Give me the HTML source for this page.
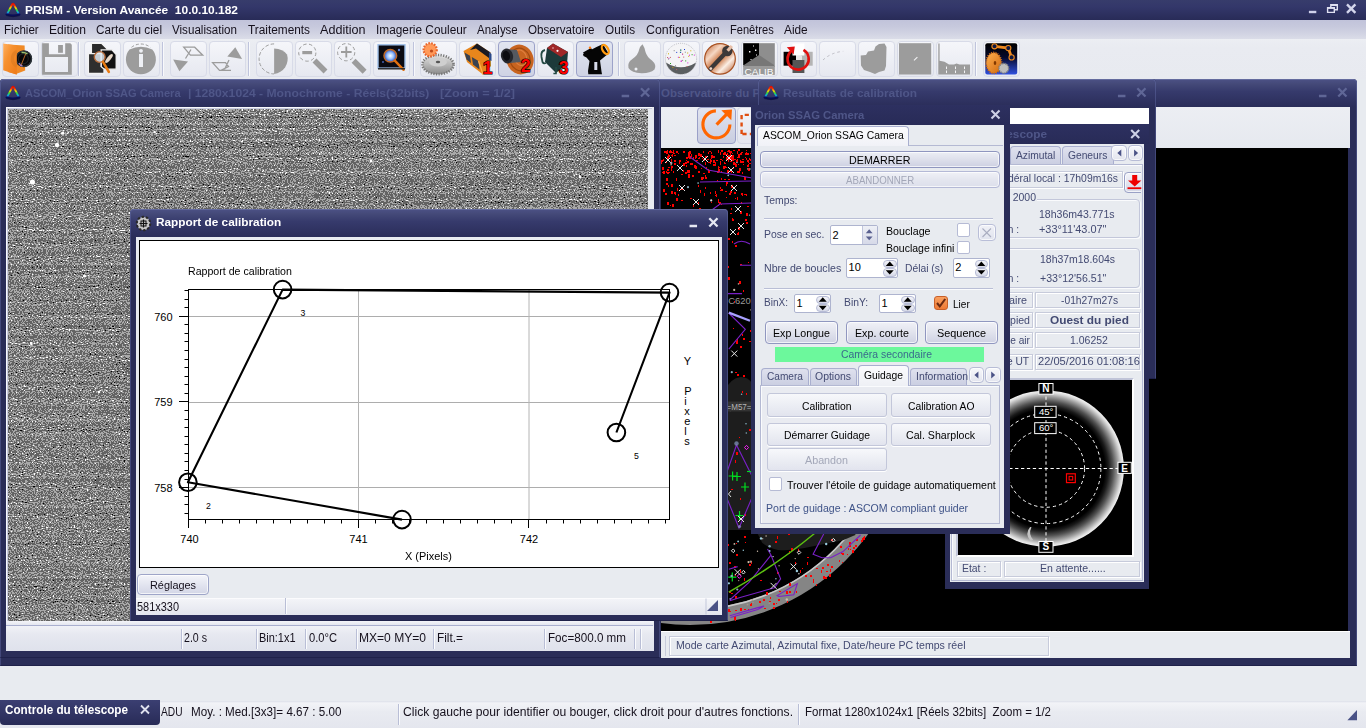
<!DOCTYPE html>
<html lang="fr"><head><meta charset="utf-8"><title>PRISM - Version Avancée 10.0.10.182</title>
<style>
html,body{margin:0;padding:0}
body{width:1366px;height:728px;overflow:hidden;background:#e8ebf0;position:relative;font-family:"Liberation Sans",sans-serif}
div{position:absolute;box-sizing:border-box}
svg{position:absolute;overflow:visible}
.t{position:absolute;white-space:pre;line-height:1;transform-origin:0 0}
.win{background:#2a2d58;border-radius:4px 4px 0 0;overflow:hidden}
.tb{left:0;top:0;right:0;background:linear-gradient(#6a7099 0,#4a4f82 1.5px,#444978 5px,#363a6c 45%,#2a2d59 100%)}
.btn{border:1px solid #9ea5c8;border-radius:4px;background:linear-gradient(#f4f5fa,#e3e5f0 50%,#d3d6e6);box-shadow:inset 0 0 0 1px rgba(255,255,255,.7)}
.btn2{border:1px solid #c3c7da;border-radius:3px;background:linear-gradient(#f7f8fb,#eceef4 50%,#e2e4ee);box-shadow:0 1px 0 #fff}
.ed{border:1px solid #aeb4cf;background:#fff;border-radius:2px}
.pn{border:1px solid #c7cbdb;box-shadow:inset 1px 1px 0 #fff, 1px 1px 0 #fff;}
</style></head><body>
<div style="left:0px;top:0px;width:1366px;height:19.5px;background:linear-gradient(#373c6b 0,#33376a 35%,#282b57 100%)"></div>
<svg style="left:4.6px;top:1.9px" width="16" height="16" viewBox="0 0 17 17"><defs><linearGradient id="rb4601" x1="0" y1="0" x2="0" y2="1"><stop offset="0" stop-color="#e01000"/><stop offset=".18" stop-color="#ff3000"/><stop offset=".4" stop-color="#ffd800"/><stop offset=".6" stop-color="#30d830"/><stop offset=".8" stop-color="#10b0e0"/><stop offset="1" stop-color="#1030b0"/></linearGradient></defs><path d="M2.2 13 L7.6 2.4 Q8.5 1.2 9.4 2.4 L14.8 13" fill="none" stroke="url(#rb4601)" stroke-width="1.9" stroke-linejoin="round" stroke-linecap="round"/><path d="M1.6 13.3 Q8.5 15.6 15.4 13.3" fill="none" stroke="#0a0e58" stroke-width="2.2" stroke-linecap="round"/><path d="M2 14.6 Q8.5 16.8 15 14.6" fill="none" stroke="#10123a" stroke-width="1" stroke-linecap="round" opacity=".8"/></svg>
<span class="t" style="left:25.20px;top:4.77px;font-size:11.5px;color:#fff;font-weight:bold;transform:scaleX(1.0391);">PRISM - Version Avancée  10.0.10.182</span>
<svg style="left:0;top:0" width="1" height="1"><path d="M1308.9 12 h7.4" stroke="#cfd1ea" stroke-width="2.4"/><path d="M1330.8 4.6 h6.5 v5.2 h-6.5 z M1330.8 5.2 h6.5" fill="none" stroke="#dfe0f0" stroke-width="1.4"/><path d="M1327.6 7.6 h6.7 v4.8 h-6.7 z" fill="#2c2f60" stroke="#dfe0f0" stroke-width="1.4"/><path d="M1327.6 8.1 h6.7" stroke="#dfe0f0" stroke-width="1.6"/><path d="M1347 4.4 l8.4 8.4 M1355.4 4.4 l-8.4 8.4" stroke="#d4d6ec" stroke-width="2.4"/></svg>
<div style="left:0px;top:19.5px;width:1366px;height:20px;background:linear-gradient(#c1c3da 0,#c7c9dd 35%,#d2d4e3 70%,#dcdee9 100%)"></div>
<span class="t" style="left:4.30px;top:24.24px;font-size:12px;color:#15101c;transform:scaleX(0.9637);">Fichier</span>
<span class="t" style="left:49.00px;top:24.24px;font-size:12px;color:#15101c;transform:scaleX(1.0084);">Edition</span>
<span class="t" style="left:96.00px;top:24.24px;font-size:12px;color:#15101c;transform:scaleX(0.9797);">Carte du ciel</span>
<span class="t" style="left:172.00px;top:24.24px;font-size:12px;color:#15101c;transform:scaleX(0.9679);">Visualisation</span>
<span class="t" style="left:248.00px;top:24.24px;font-size:12px;color:#15101c;transform:scaleX(0.9856);">Traitements</span>
<span class="t" style="left:320.00px;top:24.24px;font-size:12px;color:#15101c;transform:scaleX(1.0492);">Addition</span>
<span class="t" style="left:375.70px;top:24.24px;font-size:12px;color:#15101c;transform:scaleX(0.9865);">Imagerie Couleur</span>
<span class="t" style="left:477.00px;top:24.24px;font-size:12px;color:#15101c;transform:scaleX(0.9534);">Analyse</span>
<span class="t" style="left:528.00px;top:24.24px;font-size:12px;color:#15101c;transform:scaleX(0.9680);">Observatoire</span>
<span class="t" style="left:605.00px;top:24.24px;font-size:12px;color:#15101c;transform:scaleX(0.9780);">Outils</span>
<span class="t" style="left:646.00px;top:24.24px;font-size:12px;color:#15101c;transform:scaleX(1.0311);">Configuration</span>
<span class="t" style="left:730.00px;top:24.24px;font-size:12px;color:#15101c;transform:scaleX(0.9228);">Fenêtres</span>
<span class="t" style="left:784.00px;top:24.24px;font-size:12px;color:#15101c;transform:scaleX(0.9868);">Aide</span>
<div style="left:0px;top:39.3px;width:1366px;height:39.7px;background:linear-gradient(#eceef3 0,#e9ebf1 20%,#e8eaf0 100%)"></div>
<div style="left:1.5px;top:40.7px;width:37px;height:36.3px;background:linear-gradient(#f5f6fa,#e6e8f0);border:1px solid #d8dbe8;border-radius:4px"></div>
<div style="left:40.5px;top:40.7px;width:37px;height:36.3px;background:linear-gradient(#f5f6fa,#e6e8f0);border:1px solid #d8dbe8;border-radius:4px"></div>
<div style="left:84px;top:40.7px;width:37px;height:36.3px;background:linear-gradient(#f5f6fa,#e6e8f0);border:1px solid #d8dbe8;border-radius:4px"></div>
<div style="left:123px;top:40.7px;width:37px;height:36.3px;background:linear-gradient(#f5f6fa,#e6e8f0);border:1px solid #d8dbe8;border-radius:4px"></div>
<div style="left:169.5px;top:40.7px;width:37px;height:36.3px;background:linear-gradient(#f5f6fa,#e6e8f0);border:1px solid #d8dbe8;border-radius:4px"></div>
<div style="left:208.5px;top:40.7px;width:37px;height:36.3px;background:linear-gradient(#f5f6fa,#e6e8f0);border:1px solid #d8dbe8;border-radius:4px"></div>
<div style="left:255.5px;top:40.7px;width:37px;height:36.3px;background:linear-gradient(#f5f6fa,#e6e8f0);border:1px solid #d8dbe8;border-radius:4px"></div>
<div style="left:294.5px;top:40.7px;width:37px;height:36.3px;background:linear-gradient(#f5f6fa,#e6e8f0);border:1px solid #d8dbe8;border-radius:4px"></div>
<div style="left:333.5px;top:40.7px;width:37px;height:36.3px;background:linear-gradient(#f5f6fa,#e6e8f0);border:1px solid #d8dbe8;border-radius:4px"></div>
<div style="left:372.5px;top:40.7px;width:37px;height:36.3px;background:linear-gradient(#f5f6fa,#e6e8f0);border:1px solid #d8dbe8;border-radius:4px"></div>
<div style="left:419.5px;top:40.7px;width:37px;height:36.3px;background:linear-gradient(#f5f6fa,#e6e8f0);border:1px solid #d8dbe8;border-radius:4px"></div>
<div style="left:458.5px;top:40.7px;width:37px;height:36.3px;background:linear-gradient(#f5f6fa,#e6e8f0);border:1px solid #d8dbe8;border-radius:4px"></div>
<div style="left:497.5px;top:40.7px;width:37px;height:36.3px;background:linear-gradient(#e2e5f0,#cfd3e4);border:1px solid #9ca2c9;border-radius:4px"></div>
<div style="left:536.5px;top:40.7px;width:37px;height:36.3px;background:linear-gradient(#f5f6fa,#e6e8f0);border:1px solid #d8dbe8;border-radius:4px"></div>
<div style="left:575.5px;top:40.7px;width:37px;height:36.3px;background:linear-gradient(#e2e5f0,#cfd3e4);border:1px solid #9ca2c9;border-radius:4px"></div>
<div style="left:623.5px;top:40.7px;width:37px;height:36.3px;background:linear-gradient(#f5f6fa,#e6e8f0);border:1px solid #d8dbe8;border-radius:4px"></div>
<div style="left:662.5px;top:40.7px;width:37px;height:36.3px;background:linear-gradient(#f5f6fa,#e6e8f0);border:1px solid #d8dbe8;border-radius:4px"></div>
<div style="left:701.5px;top:40.7px;width:37px;height:36.3px;background:linear-gradient(#f5f6fa,#e6e8f0);border:1px solid #d8dbe8;border-radius:4px"></div>
<div style="left:740.5px;top:40.7px;width:37px;height:36.3px;background:linear-gradient(#f5f6fa,#e6e8f0);border:1px solid #d8dbe8;border-radius:4px"></div>
<div style="left:779.5px;top:40.7px;width:37px;height:36.3px;background:linear-gradient(#f5f6fa,#e6e8f0);border:1px solid #d8dbe8;border-radius:4px"></div>
<div style="left:818.5px;top:40.7px;width:37px;height:36.3px;background:linear-gradient(#f5f6fa,#e6e8f0);border:1px solid #d8dbe8;border-radius:4px"></div>
<div style="left:857.5px;top:40.7px;width:37px;height:36.3px;background:linear-gradient(#f5f6fa,#e6e8f0);border:1px solid #d8dbe8;border-radius:4px"></div>
<div style="left:896.5px;top:40.7px;width:37px;height:36.3px;background:linear-gradient(#f5f6fa,#e6e8f0);border:1px solid #d8dbe8;border-radius:4px"></div>
<div style="left:935.5px;top:40.7px;width:37px;height:36.3px;background:linear-gradient(#f5f6fa,#e6e8f0);border:1px solid #d8dbe8;border-radius:4px"></div>
<div style="left:982.5px;top:40.7px;width:37px;height:36.3px;background:linear-gradient(#f5f6fa,#e6e8f0);border:1px solid #d8dbe8;border-radius:4px"></div>
<div style="left:77.5px;top:42px;width:1px;height:34px;background:#bfc4dc;box-shadow:1px 0 0 #f8f9fc"></div>
<div style="left:162px;top:42px;width:1px;height:34px;background:#bfc4dc;box-shadow:1px 0 0 #f8f9fc"></div>
<div style="left:247.5px;top:42px;width:1px;height:34px;background:#bfc4dc;box-shadow:1px 0 0 #f8f9fc"></div>
<div style="left:413px;top:42px;width:1px;height:34px;background:#bfc4dc;box-shadow:1px 0 0 #f8f9fc"></div>
<div style="left:618px;top:42px;width:1px;height:34px;background:#bfc4dc;box-shadow:1px 0 0 #f8f9fc"></div>
<div style="left:975px;top:42px;width:1px;height:34px;background:#bfc4dc;box-shadow:1px 0 0 #f8f9fc"></div>
<svg style="left:0;top:0" width="1" height="1" font-family="Liberation Sans, sans-serif"><defs><linearGradient id="fo" x1="0" y1="0" x2="1" y2="1"><stop offset="0" stop-color="#ffb060"/><stop offset=".4" stop-color="#f6902e"/><stop offset="1" stop-color="#ee7a18"/></linearGradient><radialGradient id="lens" cx=".45" cy=".45"><stop offset="0" stop-color="#000"/><stop offset=".55" stop-color="#111"/><stop offset=".7" stop-color="#4a6a40"/><stop offset=".8" stop-color="#222"/><stop offset="1" stop-color="#1c2830"/></radialGradient><radialGradient id="bl" cx=".5" cy=".5"><stop offset="0" stop-color="#fff"/><stop offset=".5" stop-color="#9cc4ff"/><stop offset="1" stop-color="#2a50c0"/></radialGradient><linearGradient id="cu" x1="0" y1="0" x2="1" y2="1"><stop offset="0" stop-color="#b85a2a"/><stop offset=".3" stop-color="#f6d8c4"/><stop offset=".5" stop-color="#c8703c"/><stop offset=".7" stop-color="#fbeee4"/><stop offset="1" stop-color="#b05020"/></linearGradient><linearGradient id="bk" x1="0" y1="0" x2="0" y2="1"><stop offset="0" stop-color="#000"/><stop offset=".45" stop-color="#05082a"/><stop offset="1" stop-color="#3050e0"/></linearGradient><linearGradient id="og" x1="0" y1="0" x2="1" y2="1"><stop offset="0" stop-color="#ffb050"/><stop offset="1" stop-color="#d06a10"/></linearGradient><linearGradient id="gg" x1="0" y1="0" x2="0" y2="1"><stop offset="0" stop-color="#e2e2e2"/><stop offset="1" stop-color="#8c8c8c"/></linearGradient></defs><path d="M8 44.5 L24.6 45.6 L25.2 70.5 L16 74 L8 72 Z" fill="#f08a26"/><circle cx="23.8" cy="58.8" r="8.3" fill="#08080a"/><circle cx="23.8" cy="58.8" r="7.7" fill="none" stroke="#2c343a" stroke-width="1.4"/><circle cx="23.3" cy="58.8" r="5" fill="none" stroke="#1c2024" stroke-width="1.2"/><path d="M21 65.5 L25.8 53.5" stroke="#e08030" stroke-width=".8"/><path d="M21.5 52.6 Q25 52 27.5 54" fill="none" stroke="#b0e080" stroke-width="1.5" opacity=".85"/><path d="M19 63 Q20 65.5 22.5 66" fill="none" stroke="#b088d8" stroke-width="1.4" opacity=".85"/><path d="M3.2 43.4 L16.8 45.6 L16.8 74.7 L3.2 70.2 Z" fill="url(#fo)"/><path d="M16.8 51.5 A8.3 8.3 0 0 0 16.8 66.2" fill="none" stroke="#d87a20" stroke-width="3.2" opacity=".55"/><path d="M42.1 43.2 H48.9 V54.3 H65.2 V43.2 H70.3 L71.8 44.7 V74.8 H42.1 Z M45 57 V72 H68 V57 Z" fill="#9c9c9c" fill-rule="evenodd"/><rect x="58.1" y="45" width="4.8" height="7.8" fill="#9c9c9c"/><path d="M91.4 43.4 H101.5 L107 48.8 V66 H91.4 Z" fill="#2a2a2a" stroke="#f2f2f2" stroke-width="1.3"/><path d="M101.2 49.8 H112 L116.2 54.5 V69.2 H101.2 Z" fill="#111" stroke="#f2f2f2" stroke-width="1.3"/><ellipse cx="109" cy="58.5" rx="5.5" ry="1.8" transform="rotate(-50 109 58.5)" fill="#e8d8c8"/><path d="M88.4 53.6 H101 V66.5 L104 69 V73.5 H88.4 Z" fill="#2e2e2e" stroke="#f2f2f2" stroke-width="1.3"/><circle cx="99.7" cy="57" r="5.4" fill="#dfe8f0" fill-opacity=".85" stroke="#b46a3a" stroke-width="1.4"/><path d="M103 61.8 L108.8 71.8" stroke="#e87a10" stroke-width="2.6" stroke-linecap="round"/><path d="M129.5 49.5 A15 15 0 1 0 152.3 49.5 Q141 44 129.5 49.5Z" fill="#9c9c9c"/><path d="M131.5 47.3 A15 15 0 0 1 150.3 47.3" fill="none" stroke="#9c9c9c" stroke-width="1" stroke-dasharray="3 2"/><rect x="139" y="54" width="4" height="13" fill="#eef0f5"/><circle cx="141" cy="50.8" r="1.9" fill="#eef0f5"/><path d="M173.2 59.5 L188 61.4 L179.4 71.2Z" fill="#9c9c9c"/><path d="M183.7 47.2 H194.7 L202.7 55.2 H190.4 Z M191 49.5 L185.5 58.5" fill="none" stroke="#9c9c9c" stroke-width="1.3"/><path d="M235.3 47.2 L242.1 58.9 L227.3 56.5Z" fill="#9c9c9c"/><path d="M212.6 62.6 H225.5 L228.5 66.5 L221 70.4 H219.5 Z M229 60 L224.5 69.5 M219 70.4 H231" fill="none" stroke="#9c9c9c" stroke-width="1.3"/><path d="M274.1 48.4 Q283 48.8 287 54.5 A15 15 0 0 1 274.1 73.9 Z" fill="#9c9c9c"/><path d="M274.1 43.9 A15 15 0 0 0 274.1 73.9" fill="none" stroke="#9c9c9c" stroke-width="1" stroke-dasharray="3.5 2"/><circle cx="307.3" cy="52.6" r="8.6" fill="none" stroke="#9c9c9c" stroke-width="1" stroke-dasharray="3.5 2.5"/><rect x="302.3" y="51" width="9.8" height="3.2" fill="#9c9c9c"/><path d="M314.5 60.5 L325.5 71.5" stroke="#9c9c9c" stroke-width="5.5"/><circle cx="346.2" cy="52.2" r="8.6" fill="none" stroke="#9c9c9c" stroke-width="1" stroke-dasharray="3.5 2.5"/><path d="M341 52 h10.6 M346.3 46.6 v10.8" stroke="#9c9c9c" stroke-width="1.8"/><path d="M353.6 60.8 L364.6 71.8" stroke="#9c9c9c" stroke-width="5.5"/><rect x="378" y="44.8" width="27" height="23.3" fill="#0a0a12" stroke="#9fc0ea" stroke-width="1.4"/><circle cx="399" cy="50" r="1.2" fill="#5a80d0"/><circle cx="383" cy="62" r="1" fill="#4060b0"/><circle cx="390.3" cy="55.8" r="6.3" fill="url(#bl)" stroke="#c06a28" stroke-width="1.5"/><path d="M394.8 60.6 L403.6 69.8" stroke="#e07010" stroke-width="2.4" stroke-linecap="round"/><path d="M378 68.8 h27" stroke="#222" stroke-width="1.4"/><ellipse cx="438" cy="64.6" rx="15.6" ry="9.6" fill="url(#gg)"/><ellipse cx="438" cy="64.6" rx="15.6" ry="9.6" fill="none" stroke="#777" stroke-width="2.6" stroke-dasharray="1.2 1.4"/><ellipse cx="438" cy="62" rx="9" ry="4.6" fill="#cfcfcf"/><ellipse cx="438" cy="62" rx="2.2" ry="1.3" fill="#555"/><circle cx="430.2" cy="49.8" r="6.6" fill="#ff9a5a" stroke="#e8642a" stroke-width="2.2" stroke-dasharray="1.6 1.3"/><circle cx="431.5" cy="51" r="1.6" fill="#c04a18"/><path d="M463.5 51 L477 43.5 L490.5 52.5 L491 66 L483 74.5 L467 62 Z" fill="#e8861c"/><path d="M477 43.5 L490.5 52.5 L489 58 L476 48.5 L470 50Z" fill="#1a1a22"/><path d="M489 52 L491.5 54 V61 L489 60Z" fill="#2a4a8a"/><path d="M464.5 52.5 L470 55.8 L471 63 L466.5 59.5Z M471.8 57 L478.5 61 L479.5 69.5 L473 64.5Z" fill="#3a4250"/><path d="M478.5 61 L483 74.5" stroke="#ffb050" stroke-width="1.2"/><text x="487.5" y="74.3" font-size="17.5" font-weight="bold" fill="#f00" stroke="#000" stroke-width="1.2" paint-order="stroke" text-anchor="middle">1</text><ellipse cx="520" cy="59.5" rx="13.5" ry="15" transform="rotate(-20 520 59.5)" fill="#c86420"/><ellipse cx="520" cy="59.5" rx="10" ry="11.5" transform="rotate(-20 520 59.5)" fill="none" stroke="#a04a10" stroke-width="1.2"/><ellipse cx="521" cy="58" rx="6" ry="8" transform="rotate(-20 520 59.5)" fill="none" stroke="#e08040" stroke-width="1"/><path d="M505 49 L517 50 L521 62 L510 63Z" fill="#555960"/><ellipse cx="507" cy="56" rx="6" ry="7.5" transform="rotate(-15 507 56)" fill="#25262c"/><ellipse cx="506.4" cy="55.6" rx="3.6" ry="5" transform="rotate(-15 507 56)" fill="#0c0c10"/><text x="525.5" y="72.3" font-size="17.5" font-weight="bold" fill="#f00" stroke="#000" stroke-width="1.2" paint-order="stroke" text-anchor="middle">2</text><path d="M547 48 L553 43.5 L568 52 L567 64 L556 73 L545 62Z" fill="#1c3a3a"/><path d="M547 48 L553 43.5 L568 52 L561 57Z" fill="#a02828"/><circle cx="557.5" cy="50.8" r="1.1" fill="#fff"/><circle cx="553" cy="48" r=".8" fill="#f0c0c0"/><path d="M545 50 Q540.5 51 541.5 57 L542.5 62 Q543.5 64 546 63" fill="none" stroke="#244a44" stroke-width="1.8"/><path d="M556 67 v6.5 h-2.6" fill="none" stroke="#244a44" stroke-width="1.6"/><text x="563.5" y="74" font-size="17.5" font-weight="bold" fill="#f00" stroke="#000" stroke-width="1.2" paint-order="stroke" text-anchor="middle">3</text><path d="M583 54 L596.5 47 L603 44 L608.5 53.5 L600 60.5 L601.5 71.5 L602 74.3 H588.3 L588 71 L589.5 61 L586.5 57.5 L583.5 56 Z M594.3 62 V70 H597.3 V62 Z" fill="#050505" fill-rule="evenodd"/><path d="M583 52.5 L591 48 L592.5 50.5 L585 55Z" fill="#050505"/><ellipse cx="605.3" cy="49.5" rx="2.8" ry="5" transform="rotate(-30 605.3 49.5)" fill="none" stroke="#ff9a10" stroke-width="2.2"/><circle cx="590" cy="47.8" r="1.2" fill="#ff7a10"/><path d="M642.5 44.2 Q645 48 645.5 52 Q647 57 652 60.5 Q657 65 654.5 69.5 Q650 73.5 641.5 73.3 Q631.5 73 628.5 68 Q627 62.5 633 58.5 Q638 55 639 50 Q640 46 642.5 44.2Z" fill="#9c9c9c"/><circle cx="636" cy="69" r="1.5" fill="#eef0f5"/><circle cx="681" cy="58.9" r="15.6" fill="#f4f4f6"/><path d="M665.9 62.5 A15.6 15.6 0 0 0 696.1 62.5 Q681 72 665.9 62.5Z" fill="#5a5e60"/><circle cx="681" cy="58.9" r="15.6" fill="none" stroke="#b0b0b8" stroke-width=".8" stroke-dasharray="1 1"/><rect x="693.8" y="54.6" width="1" height="1" fill="#d020d0"/><rect x="685.2" y="60.4" width="1" height="1" fill="#20a020"/><rect x="680.2" y="49.5" width="1" height="1" fill="#2040d0"/><rect x="681.0" y="60.6" width="1" height="1" fill="#d020d0"/><rect x="679.1" y="56.9" width="1" height="1" fill="#d0b000"/><rect x="673.7" y="50.2" width="1" height="1" fill="#888"/><rect x="688.2" y="55.8" width="1" height="1" fill="#d0b000"/><rect x="668.4" y="57.8" width="1" height="1" fill="#d020d0"/><rect x="672.4" y="66.8" width="1" height="1" fill="#d0b000"/><rect x="670.0" y="63.0" width="1" height="1" fill="#20a020"/><rect x="677.9" y="56.8" width="1" height="1" fill="#d020d0"/><rect x="682.1" y="59.9" width="1" height="1" fill="#888"/><rect x="667.0" y="57.1" width="1" height="1" fill="#c06060"/><rect x="668.0" y="53.3" width="1" height="1" fill="#d0b000"/><rect x="684.0" y="49.0" width="1" height="1" fill="#2040d0"/><rect x="682.2" y="53.6" width="1" height="1" fill="#d0b000"/><rect x="686.6" y="66.0" width="1" height="1" fill="#c06060"/><rect x="680.3" y="49.7" width="1" height="1" fill="#20a020"/><rect x="668.1" y="58.6" width="1" height="1" fill="#888"/><rect x="669.9" y="56.9" width="1" height="1" fill="#c06060"/><rect x="690.3" y="50.3" width="1" height="1" fill="#d0b000"/><rect x="675.0" y="65.3" width="1" height="1" fill="#888"/><rect x="679.9" y="51.9" width="1" height="1" fill="#20a020"/><rect x="691.6" y="54.2" width="1" height="1" fill="#20a020"/><rect x="687.2" y="52.5" width="1" height="1" fill="#d0b000"/><rect x="676.1" y="69.1" width="1" height="1" fill="#c06060"/><rect x="684.8" y="51.7" width="1" height="1" fill="#888"/><rect x="676.2" y="51.9" width="1" height="1" fill="#2040d0"/><rect x="680.2" y="51.8" width="1" height="1" fill="#2040d0"/><rect x="689.0" y="54.7" width="1" height="1" fill="#d020d0"/><rect x="682.0" y="53.7" width="1" height="1" fill="#d020d0"/><rect x="683.2" y="56.6" width="1" height="1" fill="#c06060"/><rect x="687.3" y="62.4" width="1" height="1" fill="#d020d0"/><rect x="680.5" y="60.7" width="1" height="1" fill="#d020d0"/><circle cx="720" cy="58.9" r="15.3" fill="url(#cu)" stroke="#a85020" stroke-width="1.2"/><path d="M710.5 68.8 L725 53.5" stroke="#3c3838" stroke-width="4.2" stroke-linecap="round"/><circle cx="727.3" cy="51" r="5.2" fill="#3c3838"/><path d="M727.6 50.7 L731.8 46" stroke="#e8c0a8" stroke-width="3.2"/><circle cx="710.8" cy="68.6" r="1.4" fill="#f3d8c8"/><rect x="743.2" y="43.2" width="15.8" height="22" fill="#000"/><rect x="759" y="43.2" width="15.8" height="22" fill="#8e8e8e"/><path d="M743.2 65.5 L759 55 L774.8 65.5 V67 H743.2Z" fill="#777"/><rect x="743.2" y="66" width="31.6" height="8.9" fill="#9a9a9a"/><path d="M753 45.5h1v1h-1z M749 51h1.4v1.4h-1.4z M755 49.5h1.4v1.4h-1.4z M750.5 59h1v1h-1z M756 54.5h1v1h-1z" fill="#fff"/><text x="759" y="74.6" font-size="9.6" fill="#fff" text-anchor="middle" textLength="29" lengthAdjust="spacingAndGlyphs">CALIB</text><rect x="783.6" y="51.8" width="12.4" height="13.9" fill="#000"/><rect x="800.8" y="51.8" width="11.9" height="13.9" fill="#b4b4b4"/><rect x="792.5" y="60" width="11.9" height="13" fill="#555"/><rect x="792.5" y="43.5" width="11.9" height="12" fill="#fff"/><rect x="796" y="55.5" width="6" height="4.5" fill="#e8e8e8"/><path d="M791 51.2 A10.6 10.6 0 1 0 803.5 49.9" fill="none" stroke="#e01010" stroke-width="2.6"/><path d="M786.8 47.2 L794.8 46.6 L793.6 54.6Z" fill="#e01010"/><path d="M823 60 Q831 52.5 843.2 51.3" fill="none" stroke="#bcbcc4" stroke-width="1" stroke-dasharray="2.5 3"/><path d="M879 44 L884.5 43.6 L886.5 47 L886 66 L884.5 70.5 L879 72 L875 74 L870 72 L864 70 L861 65.5 L860.7 55.5 L866 55 L868 51.5 L874 50.5 L875.5 46.5Z" fill="#9c9c9c"/><rect x="899" y="43.2" width="32.2" height="31.3" fill="#9c9c9c"/><path d="M914 60.3 L917.4 57.2" stroke="#f4f4f6" stroke-width="1.1"/><path d="M938.3 43.5 H939.6 V60.8 L944.5 61.8 L949 64.6 H954 L956.5 63.6 L959.5 64.6 H970 V74.5 H938.3Z" fill="#9c9c9c"/><path d="M946.5 66.5v7 M955.5 66.5v7 M964.5 66.5v7" stroke="#f4f4f6" stroke-width="1" stroke-dasharray="2.6 1.4"/><rect x="985.3" y="43.2" width="31.9" height="31.3" rx="2" fill="url(#bk)"/><path d="M994.5 46.3 L1008.3 48.1 L1011.6 57.4" fill="none" stroke="#f08a20" stroke-width="2.8"/><circle cx="994.5" cy="46.3" r="2.6" fill="#101840" stroke="#f08a20" stroke-width="1.1"/><circle cx="1008.3" cy="48.1" r="2.6" fill="#101840" stroke="#f08a20" stroke-width="1.1"/><circle cx="1011.6" cy="57.4" r="2.6" fill="#101840" stroke="#f08a20" stroke-width="1.1"/><ellipse cx="993.8" cy="62.9" rx="7.6" ry="10.4" fill="url(#og)"/><ellipse cx="993.8" cy="62.9" rx="7.6" ry="10.4" fill="none" stroke="#c86a18" stroke-width="2" stroke-dasharray="1 1.2"/><ellipse cx="995" cy="62.9" rx="1.3" ry="2" fill="#803800"/><circle cx="1003.8" cy="68.3" r="4.9" fill="#bdbdbd" stroke="#7a7a7a" stroke-width="1.6" stroke-dasharray="1 1"/></svg>
<div class="win" style="left:0px;top:79px;width:1357px;height:586.5px;"><div class="tb" style="height:28px"></div><div style="left:0;top:1px;width:1357px;height:585.5px">
<span class="t" style="left:661.00px;top:7.77px;font-size:11.5px;color:#4f5688;font-weight:bold;">Observatoire du PRISM</span>
<svg style="left:0;top:0" width="1" height="1"><path d="M1318.95 16.0 h7.5" stroke="#5f6696" stroke-width="2.3"/><path d="M1338.3000000000002 8.3 l8.2 8.2 M1346.5 8.3 l-8.2 8.2" stroke="#5f6696" stroke-width="2.3"/></svg>
<div style="left:661px;top:26.7px;width:689px;height:41.3px;background:linear-gradient(#eceef3,#e6e9ef)"></div>
<div style="left:697.2px;top:26.9px;width:38.6px;height:36.8px;background:linear-gradient(#e1e4ef,#c9cde0);border:1px solid #9aa0c8;border-radius:4px"></div>
<div style="left:737.4px;top:26.9px;width:38.6px;height:36.8px;background:linear-gradient(#f3f4f8,#e3e5ee);border:1px solid #d3d6e4;border-radius:4px"></div>
<svg style="left:0;top:-80px" width="1" height="1"><path d="M715.9 110.9 A13.5 13.5 0 1 0 729.9 124.6" fill="none" stroke="#ff6600" stroke-width="3.1"/><path d="M716.6 124.6 L727 113.8" stroke="#ff6600" stroke-width="3.2"/><path d="M721.3 110.2 L732 109.5 L731.3 120.2 Z" fill="#ff6600"/><path d="M741.6 134 V114.9 H762 V134 Z" fill="none" stroke="#e04e10" stroke-width="2.4" stroke-dasharray="4.2 3.2"/></svg>
<div style="left:661px;top:68px;width:687.3px;height:483px;background:#000;overflow:hidden"></div>
<div style="left:661px;top:551px;width:689px;height:1.2px;background:#fff"></div>
<div style="left:661px;top:552.2px;width:689px;height:26.3px;background:#e8ebf0"></div>
<div style="left:663.5px;top:555.5px;width:2.5px;height:20.5px;border-right:1px solid #c7cbdb"></div>
<div class="pn" style="left:669px;top:555.5px;width:380px;height:20.8px;"></div>
<span class="t" style="left:675.50px;top:559.99px;font-size:11px;color:#434a72;transform:scaleX(0.9624);">Mode carte Azimutal, Azimutal fixe, Date/heure PC temps réel</span>
<svg style="left:0;top:-80px" width="1" height="1" font-family="Liberation Sans, sans-serif"><defs><clipPath id="skc"><rect x="661" y="148" width="687.3" height="483"/></clipPath><clipPath id="skb"><rect x="661" y="500" width="687.3" height="131"/></clipPath></defs><g clip-path="url(#skc)"><g clip-path="url(#skb)"><circle cx="690" cy="405" r="212" fill="none" stroke="#858585" stroke-width="16"/><circle cx="690" cy="405" r="204.7" fill="none" stroke="#c9c9c9" stroke-width="1.6"/></g><path d="M724 392 Q730 378 741 377 Q748 377 752 383 L752 532 L757.8 534 L762.2 542.8 Q768 548 778 549.9 Q790 551 804.4 548.1 L843 540.2 L855.3 535 L856 530 L724 530 Z" fill="#1d1d1d"/><path d="M718 166h1v3h-1zM732 155h1v2h-1zM671 160h1v3h-1zM710 162h1v2h-1zM698 153h2v2h-2zM730 151h2v2h-2zM673 171h1v2h-1zM731 171h1v2h-1zM687 171h1v2h-1zM747 165h2v2h-2zM663 159h1v2h-1zM667 156h1v2h-1zM667 157h2v3h-2zM724 153h2v2h-2zM666 171h1v2h-1zM738 149h2v2h-2zM695 168h2v1h-2zM725 163h1v1h-1zM730 170h2v2h-2zM708 170h2v3h-2zM671 166h2v2h-2zM664 171h1v2h-1zM692 163h1v2h-1zM686 165h1v2h-1zM723 156h1v2h-1zM727 156h2v2h-2zM727 151h2v1h-2zM683 163h2v3h-2zM720 152h1v3h-1zM691 154h1v3h-1zM671 159h1v1h-1zM738 156h2v2h-2zM750 159h2v2h-2zM705 156h2v2h-2zM671 168h1v3h-1zM740 153h2v2h-2zM708 162h2v1h-2zM733 167h1v2h-1zM694 165h2v3h-2zM685 172h2v2h-2zM720 162h1v3h-1zM711 155h2v3h-2zM687 161h2v2h-2zM686 157h2v2h-2zM745 153h2v2h-2zM748 161h1v2h-1zM737 171h2v2h-2zM724 166h2v2h-2zM717 171h2v2h-2zM718 167h2v1h-2zM679 162h1v2h-1zM730 153h1v3h-1zM750 153h1v1h-1zM690 153h1v1h-1zM699 157h1v2h-1zM683 170h1v2h-1zM698 155h2v1h-2zM724 162h1v2h-1zM670 162h2v2h-2zM748 168h2v3h-2zM735 164h2v3h-2zM674 163h2v2h-2zM749 163h2v1h-2zM696 156h1v2h-1zM718 169h2v3h-2zM700 154h2v3h-2zM749 158h1v2h-1zM728 156h2v3h-2zM663 171h2v3h-2zM746 152h1v1h-1zM721 171h1v2h-1zM665 152h2v1h-2zM705 162h1v3h-1zM732 155h2v2h-2zM727 156h2v3h-2zM708 169h1v1h-1zM730 156h2v2h-2zM728 150h2v2h-2zM723 168h1v1h-1zM661 162h1v2h-1zM662 167h2v3h-2zM739 168h2v3h-2zM723 166h2v3h-2zM737 151h1v3h-1zM714 164h2v2h-2zM674 160h2v2h-2zM710 159h1v1h-1zM728 155h1v1h-1zM721 150h2v1h-2zM752 165h1v1h-1zM738 154h1v2h-1zM751 165h2v2h-2zM678 153h1v1h-1zM718 150h1v3h-1zM729 155h1v3h-1zM741 152h2v1h-2zM690 163h2v2h-2zM746 158h1v2h-1zM724 152h2v2h-2zM685 162h2v2h-2zM708 152h1v2h-1zM702 158h1v1h-1zM721 151h1v1h-1zM740 161h2v2h-2zM696 160h2v1h-2zM733 150h2v1h-2zM738 171h2v2h-2zM729 151h2v2h-2zM674 163h2v2h-2zM687 170h2v3h-2zM695 166h2v2h-2zM734 159h2v1h-2zM715 162h1v3h-1zM667 150h1v2h-1zM679 160h2v2h-2zM661 160h2v2h-2zM703 151h1v2h-1zM667 169h2v2h-2zM711 152h1v2h-1zM722 150h1v2h-1zM745 157h1v1h-1zM722 160h1v1h-1zM732 156h2v2h-2zM727 153h1v1h-1zM713 164h2v2h-2zM723 153h2v2h-2zM667 172h2v2h-2zM732 153h1v1h-1zM720 159h2v1h-2zM703 159h2v2h-2zM665 162h2v1h-2zM726 154h2v1h-2zM746 150h1v1h-1zM706 167h1v2h-1zM737 159h1v1h-1zM747 153h2v2h-2zM709 151h2v1h-2zM669 172h1v1h-1zM739 154h1v3h-1zM710 160h2v2h-2zM727 170h2v3h-2zM742 172h1v2h-1zM689 151h2v3h-2zM689 152h1v3h-1zM683 151h2v2h-2zM686 160h1v1h-1zM725 167h2v1h-2zM668 167h2v1h-2zM743 164h1v1h-1zM701 168h1v1h-1z" fill="#f00"/><path d="M673 150h1v2h-1zM731 158h1v1h-1zM666 151h2v3h-2zM700 155h2v2h-2zM736 161h1v2h-1zM726 157h2v3h-2zM672 154h1v3h-1zM693 157h1v2h-1zM735 163h1v3h-1zM737 157h1v1h-1zM676 151h2v2h-2zM733 162h2v3h-2zM740 160h1v3h-1zM716 160h2v1h-2zM689 156h2v3h-2zM731 159h2v2h-2zM664 151h2v2h-2zM728 159h1v3h-1zM711 156h1v3h-1zM742 161h2v2h-2zM689 154h1v2h-1zM713 160h2v3h-2zM712 156h2v1h-2zM720 161h1v1h-1zM742 159h2v1h-2zM671 155h2v1h-2zM713 156h2v2h-2zM748 160h1v2h-1zM670 150h1v2h-1zM695 157h1v2h-1zM698 158h2v1h-2zM730 161h2v1h-2zM687 157h1v1h-1zM688 155h1v3h-1zM668 154h1v3h-1zM738 164h1v1h-1zM748 164h1v1h-1zM747 160h1v2h-1zM699 154h2v2h-2zM672 152h2v1h-2zM743 164h1v1h-1zM729 157h2v3h-2zM673 153h2v1h-2zM669 151h2v2h-2zM695 155h2v3h-2zM707 159h2v1h-2zM732 158h2v3h-2zM670 151h2v2h-2zM688 152h1v3h-1zM666 153h2v1h-2zM674 155h2v1h-2zM669 155h1v2h-1zM736 160h2v2h-2z" fill="#f00"/><path d="M685 209h2v2h-2zM715 195h2v1h-2zM662 172h2v1h-2zM663 189h2v3h-2zM717 180h1v1h-1zM726 197h1v1h-1zM726 184h1v2h-1zM672 204h2v3h-2zM688 170h2v3h-2zM703 177h1v2h-1zM690 198h2v1h-2zM675 215h2v3h-2zM718 199h1v2h-1zM674 192h2v2h-2zM744 177h2v3h-2zM707 213h1v2h-1zM721 189h2v2h-2zM688 175h2v3h-2zM694 210h2v3h-2zM718 199h1v1h-1zM692 175h2v2h-2zM666 214h2v2h-2zM719 203h2v1h-2zM698 185h1v2h-1zM667 202h2v3h-2zM667 184h1v1h-1zM747 206h2v1h-2zM703 173h2v1h-2zM746 194h1v2h-1zM746 213h2v3h-2zM670 205h1v1h-1zM669 214h2v3h-2zM671 184h2v3h-2zM665 210h1v3h-1zM721 178h1v2h-1zM741 202h1v2h-1zM689 209h2v2h-2zM701 211h2v2h-2zM676 198h2v3h-2zM698 202h1v2h-1zM715 191h1v3h-1zM752 176h1v1h-1zM726 182h2v2h-2zM734 192h2v2h-2zM718 201h1v2h-1zM731 185h2v3h-2zM741 193h2v2h-2zM666 183h2v2h-2zM699 214h1v2h-1zM721 204h1v1h-1zM705 177h2v2h-2zM699 208h2v2h-2zM744 194h2v1h-2zM675 192h1v3h-1zM731 208h1v2h-1zM710 192h1v2h-1zM676 178h1v3h-1zM720 187h1v2h-1zM745 179h1v1h-1zM729 193h2v2h-2zM681 174h2v1h-2zM742 194h1v2h-1zM700 191h1v2h-1zM671 191h2v3h-2zM704 193h1v3h-1zM737 198h1v1h-1zM720 190h1v1h-1zM724 179h2v1h-2zM677 188h1v3h-1zM666 178h2v3h-2zM676 213h2v2h-2zM681 188h2v2h-2zM698 171h2v2h-2zM724 209h2v1h-2zM740 211h2v3h-2zM728 179h2v1h-2zM678 194h1v2h-1zM719 202h2v2h-2zM735 198h1v1h-1zM711 202h1v1h-1zM725 191h2v1h-2zM705 187h1v2h-1zM730 191h2v2h-2zM716 194h1v3h-1zM700 190h1v2h-1zM705 175h1v3h-1zM681 200h2v1h-2zM668 185h1v2h-1zM693 205h1v2h-1zM718 205h1v1h-1zM665 193h2v2h-2zM701 177h2v3h-2zM713 214h1v2h-1zM737 197h1v3h-1zM688 174h2v3h-2z" fill="#f00"/><path d="M669 220h1v2h-1zM723 224h1v3h-1zM691 231h2v1h-2zM715 237h2v2h-2zM703 237h2v1h-2zM738 227h2v3h-2zM721 228h2v3h-2zM672 212h2v1h-2zM689 221h1v2h-1zM662 214h2v1h-2zM713 228h1v1h-1zM745 219h2v2h-2zM700 217h2v3h-2zM688 231h2v3h-2zM717 235h1v2h-1zM704 220h1v1h-1zM701 218h2v1h-2zM697 236h2v2h-2zM674 234h2v2h-2zM686 215h2v1h-2zM746 222h2v2h-2zM717 223h2v1h-2zM687 211h1v3h-1zM683 225h1v1h-1zM732 219h2v2h-2zM717 215h1v1h-1zM679 211h2v2h-2zM665 217h2v2h-2zM681 224h1v1h-1zM730 213h2v1h-2zM684 212h1v2h-1zM732 218h1v2h-1zM689 222h1v3h-1zM737 233h2v2h-2zM738 232h1v3h-1zM722 213h2v1h-2zM724 210h1v1h-1zM728 238h2v2h-2zM683 228h1v1h-1zM715 220h2v2h-2z" fill="#f00"/><path d="M736 341h2v3h-2zM732 241h1v2h-1zM750 330h1v2h-1zM734 301h1v2h-1zM748 262h1v1h-1zM743 338h2v2h-2zM749 341h2v1h-2zM742 334h1v2h-1zM742 391h1v2h-1zM728 266h1v2h-1zM737 374h2v2h-2zM733 328h1v1h-1zM743 375h2v2h-2zM735 245h2v2h-2zM735 372h2v1h-2zM743 290h1v2h-1zM728 277h2v3h-2zM739 281h2v3h-2zM740 264h2v1h-2zM746 393h1v2h-1zM740 346h2v2h-2zM737 339h1v3h-1z" fill="#f00"/><path d="M745 542h1v1h-1zM735 596h2v3h-2zM740 570h1v3h-1zM740 498h1v2h-1zM736 543h1v1h-1zM731 489h2v1h-2zM749 429h2v2h-2zM751 561h1v3h-1zM739 437h1v1h-1zM736 554h2v2h-2zM751 499h2v2h-2zM729 592h2v1h-2zM740 408h1v2h-1zM735 460h1v3h-1zM744 514h2v2h-2zM736 452h2v3h-2z" fill="#f00"/><path d="M728 544h1v2h-1zM773 607h2v2h-2zM807 557h2v1h-2zM748 609h1v1h-1zM788 532h2v3h-2zM729 562h2v2h-2zM807 562h1v3h-1zM789 583h2v3h-2zM795 562h1v2h-1zM800 570h1v3h-1zM802 568h1v1h-1zM731 593h2v1h-2zM760 580h2v1h-2zM766 592h2v3h-2zM735 619h1v2h-1zM735 574h1v2h-1zM778 599h2v2h-2zM791 548h2v3h-2zM744 578h1v3h-1zM831 539h2v2h-2zM734 566h2v2h-2zM786 591h2v3h-2zM847 554h1v1h-1zM777 536h1v3h-1zM789 551h1v3h-1zM744 536h2v2h-2zM777 572h2v2h-2zM798 549h1v3h-1zM775 541h2v2h-2zM749 564h2v2h-2z" fill="#f00"/><path d="M816 568h2v1h-2zM724 615h2v3h-2zM827 564h2v2h-2zM813 579h1v2h-1zM770 597h1v2h-1zM764 608h2v1h-2zM856 539h2v2h-2zM829 574h2v3h-2zM813 581h1v2h-1zM816 584h1v2h-1zM734 616h2v2h-2zM850 549h1v1h-1zM720 619h1v2h-1zM821 570h1v1h-1zM826 571h2v1h-2zM744 609h2v1h-2zM830 569h1v3h-1zM863 537h2v3h-2zM849 544h2v3h-2zM821 571h1v2h-1zM842 553h2v2h-2zM864 536h1v2h-1zM722 615h2v2h-2zM717 609h2v2h-2zM853 547h2v2h-2zM730 611h1v1h-1zM776 603h1v1h-1zM823 577h2v2h-2zM823 576h2v3h-2zM779 591h2v1h-2zM740 608h2v3h-2zM705 617h2v2h-2zM810 575h2v2h-2zM763 599h2v2h-2zM842 562h1v1h-1zM831 566h2v2h-2zM850 549h1v1h-1zM825 577h2v2h-2zM839 560h1v2h-1zM735 610h2v1h-2zM841 552h1v2h-1zM862 538h1v2h-1zM787 601h1v2h-1zM840 546h2v2h-2zM852 550h2v3h-2zM848 548h1v2h-1zM822 567h2v2h-2zM855 545h2v2h-2zM759 601h2v2h-2zM796 591h1v2h-1zM750 604h1v2h-1zM710 621h2v2h-2zM751 603h1v3h-1zM734 618h2v2h-2zM773 603h2v2h-2zM769 601h2v1h-2zM861 540h2v2h-2zM849 542h2v2h-2zM789 591h2v2h-2zM728 609h2v3h-2zM805 575h2v2h-2z" fill="#f00"/><path d="M690 157 L708 170 L752 178 M700 182 L752 181 M705 215 L720 204 L752 203 M734 244 Q741 238.5 750 244 M740 265.3 H751 M728 293.6 H742 M728.8 313 L745.3 329.4 L728.8 349.2 M736.5 445 L722 486 L739 528 L757 486 Z M728.8 569.2 L737.6 566.6 M729.7 600 L749 582.4 L771 555.1 L780.6 578.9 L774.5 587.7 L741 597.3 L729.7 600.8 M771 555.1 L767.5 549 M823.7 534 L813.1 554.3 L822 557.8 L830.7 557.8 L843 551.6 L860.6 535 M777.1 595.6 L797.3 583.6 L793.8 594.7 L778.9 596.5 Z M729.7 615.8 L756.9 607.9 L764 606.1 L757.8 609.6 L730.5 617.5" fill="none" stroke="#7a20c8" stroke-width="1.1"/><path d="M728.8 312.6 L750 320.8" stroke="#a8a0ff" stroke-width="2.2"/><path d="M728.8 592.2 Q775 566 814.5 533.5" fill="none" stroke="#5cc010" stroke-width="1.5"/><path d="M728.6 476h8M732.6 471.5v9M733 476.5h8M737 472.0v9M741 487h8M745 482.5v9M735.5 515.5h8M739.5 511.0v9M728.3 577.1h8M732.3 572.6v9" stroke="#00e020" stroke-width="1.2"/><path d="M739.3 574 l2 2.2 l-2 2.2 l-2 -2.2z M746.5 445.3 l2 2.2 l-2 2.2 l-2 -2.2z" fill="none" stroke="#f020f0" stroke-width="1"/><path d="M747 471.5 h4" stroke="#00e020" stroke-width="1.2"/><path d="M731 491 l-2.5 3 l2.5 3" fill="none" stroke="#ddd" stroke-width="1"/><circle cx="736.5" cy="443.5" r="2.2" fill="#7a8ab0" opacity=".8"/><circle cx="739.5" cy="526.5" r="1.6" fill="#8a8ab8" opacity=".8"/><path d="M665 157l6 6M671 157l-6 6M677 165l6 6M683 165l-6 6M679 185l6 6M685 185l-6 6M693 199l6 6M699 199l-6 6M728 167l6 6M734 167l-6 6M731 185l6 6M737 185l-6 6M735 206l6 6M741 206l-6 6M738 223l6 6M744 223l-6 6M730 229l6 6M736 229l-6 6M726 155l6 6M732 155l-6 6M702 156l6 6M708 156l-6 6M731.3 350.6l6 6M737.3 350.6l-6 6M734.6 569.2l6 6M740.6 569.2l-6 6M790.5 563.6l6 6M796.5 563.6l-6 6M770.6 582.9l6 6M776.6 582.9l-6 6M738 516l6 6M744 516l-6 6M733.2 549.0l1.8 1.8l-1.8 1.8l-1.8 -1.8zM799 550.7l1.8 1.8l-1.8 1.8l-1.8 -1.8zM833.4 538.4000000000001l1.8 1.8l-1.8 1.8l-1.8 -1.8zM743.4 570.4000000000001l1.8 1.8l-1.8 1.8l-1.8 -1.8z" fill="none" stroke="#e8e8e8" stroke-width="1"/><circle cx="746.3" cy="433.0" r="0.8" fill="#8ab"/><circle cx="750.8" cy="309.9" r="0.7" fill="#a98"/><circle cx="671.4" cy="163.1" r="1.1" fill="#8ab"/><circle cx="737.0" cy="162.5" r="0.8" fill="#8ab"/><circle cx="670.8" cy="214.4" r="0.8" fill="#9cd"/><circle cx="731.8" cy="372.2" r="1.1" fill="#8ab"/><circle cx="746.0" cy="423.7" r="0.7" fill="#9cd"/><circle cx="730.2" cy="410.5" r="0.7" fill="#ddd"/><circle cx="750.0" cy="169.0" r="0.8" fill="#8ab"/><circle cx="688.0" cy="187.2" r="1.1" fill="#8ab"/><circle cx="728.2" cy="175.4" r="0.8" fill="#9cd"/><circle cx="741.6" cy="394.3" r="0.8" fill="#8ab"/><circle cx="698.1" cy="183.1" r="0.8" fill="#9cd"/><circle cx="671.1" cy="164.8" r="0.8" fill="#cba"/><circle cx="749.5" cy="215.1" r="0.7" fill="#9cd"/><circle cx="747.6" cy="168.9" r="0.7" fill="#cba"/><circle cx="748.5" cy="562.1" r="1.1" fill="#cba"/><circle cx="728.9" cy="583.3" r="1.1" fill="#9cd"/><circle cx="711.2" cy="200.4" r="1.1" fill="#ddd"/><circle cx="737.3" cy="589.5" r="1.1" fill="#8ab"/><circle cx="734.2" cy="289.9" r="1.1" fill="#cba"/><circle cx="738.5" cy="283.9" r="0.8" fill="#a98"/><circle cx="798.9" cy="573.7" r="0.7" fill="#ddd"/><circle cx="758.5" cy="568.7" r="0.7" fill="#a98"/><circle cx="762.7" cy="538.8" r="0.7" fill="#a98"/><circle cx="775.9" cy="578.8" r="0.7" fill="#9cd"/><circle cx="752.4" cy="600.2" r="0.9" fill="#a98"/><circle cx="747.5" cy="604.6" r="0.9" fill="#a98"/><circle cx="743.3" cy="550.3" r="0.7" fill="#9cd"/><circle cx="757.5" cy="551.2" r="0.7" fill="#cba"/><circle cx="734.4" cy="543.9" r="0.9" fill="#cba"/><circle cx="730.1" cy="598.8" r="0.7" fill="#8ab"/><circle cx="769.6" cy="546.3" r="1.2" fill="#8ab"/><circle cx="766.1" cy="536.0" r="0.7" fill="#cba"/><circle cx="795.2" cy="558.6" r="0.7" fill="#cba"/><circle cx="761.0" cy="538.4" r="1.2" fill="#9cd"/><circle cx="769.7" cy="550.9" r="0.9" fill="#9cd"/><circle cx="738.7" cy="580.6" r="0.7" fill="#a98"/><circle cx="750.8" cy="561.6" r="1.2" fill="#a98"/><circle cx="779.1" cy="565.8" r="0.7" fill="#a98"/><circle cx="773.1" cy="556.6" r="0.7" fill="#ddd"/><circle cx="769.2" cy="603.3" r="0.7" fill="#a98"/><circle cx="826.2" cy="544.0" r="1.2" fill="#9cd"/><circle cx="738.1" cy="541.4" r="0.9" fill="#9cd"/><circle cx="731.6" cy="575.9" r="1.2" fill="#8ab"/><circle cx="786.8" cy="599.5" r="1.2" fill="#cba"/><circle cx="753.0" cy="602.6" r="0.7" fill="#a98"/><circle cx="796.9" cy="571.0" r="1.2" fill="#9cd"/><text x="728.3" y="304.3" font-size="9.5" fill="#9a9a9a" textLength="22.5" lengthAdjust="spacingAndGlyphs">C620</text><rect x="728" y="401.5" width="24" height="10" fill="#333"/><text x="726.5" y="410" font-size="9.5" fill="#b4b4b4" textLength="25" lengthAdjust="spacingAndGlyphs">=M57=</text></g></svg>
</div><div style="left:0;top:0;right:0;bottom:0;border:1px solid rgba(110,120,180,.38);border-bottom-color:rgba(20,22,60,.5);border-radius:4px 4px 0 0"></div></div>
<div class="win" style="left:0px;top:79px;width:659.7px;height:579px;"><div class="tb" style="height:28px"></div><div style="left:0;top:1px;width:659.7px;height:578px">
<svg style="left:5px;top:4.8px" width="16" height="16" viewBox="0 0 17 17"><defs><linearGradient id="rb5004" x1="0" y1="0" x2="0" y2="1"><stop offset="0" stop-color="#e01000"/><stop offset=".18" stop-color="#ff3000"/><stop offset=".4" stop-color="#ffd800"/><stop offset=".6" stop-color="#30d830"/><stop offset=".8" stop-color="#10b0e0"/><stop offset="1" stop-color="#1030b0"/></linearGradient></defs><path d="M2.2 13 L7.6 2.4 Q8.5 1.2 9.4 2.4 L14.8 13" fill="none" stroke="url(#rb5004)" stroke-width="1.9" stroke-linejoin="round" stroke-linecap="round"/><path d="M1.6 13.3 Q8.5 15.6 15.4 13.3" fill="none" stroke="#0a0e58" stroke-width="2.2" stroke-linecap="round"/><path d="M2 14.6 Q8.5 16.8 15 14.6" fill="none" stroke="#10123a" stroke-width="1" stroke-linecap="round" opacity=".8"/></svg>
<span class="t" style="left:25.40px;top:7.77px;font-size:11.5px;color:#4f5688;font-weight:bold;transform:scaleX(0.9662);">ASCOM_Orion SSAG Camera</span>
<span class="t" style="left:187.60px;top:7.77px;font-size:11.5px;color:#4f5688;font-weight:bold;transform:scaleX(1.0578);">| 1280x1024 - Monochrome - Réels(32bits)</span>
<span class="t" style="left:440.00px;top:7.77px;font-size:11.5px;color:#4f5688;font-weight:bold;transform:scaleX(1.1020);">[Zoom = 1/2]</span>
<svg style="left:0;top:0" width="1" height="1"><path d="M621.6500000000001 16.0 h7.5" stroke="#5f6696" stroke-width="2.3"/><path d="M641.0 8.3 l8.2 8.2 M649.2 8.3 l-8.2 8.2" stroke="#5f6696" stroke-width="2.3"/></svg>
<div style="left:6px;top:27px;width:648px;height:544px;background:#e8ebf0"></div>
<div style="left:6px;top:27px;width:646px;height:516px;background:#f8f9fc"></div>
<div style="left:7px;top:28px;width:645px;height:515px;background:#c9cce0"></div>
<div style="left:8px;top:29px;width:640px;height:512px;background:#858585;overflow:hidden"><svg style="left:0;top:0" width="640" height="512"><filter id="nz" x="0" y="0" width="100%" height="100%" color-interpolation-filters="sRGB"><feTurbulence type="fractalNoise" baseFrequency="0.0007 0.3" numOctaves="3" seed="11"/><feColorMatrix type="matrix" values="1 0 0 0 0  1 0 0 0 0  1 0 0 0 0  0 0 0 0 1" result="bd"/><feTurbulence type="fractalNoise" baseFrequency="0.62 0.93" numOctaves="1" seed="7"/><feColorMatrix type="matrix" values="1 0 0 0 0  1 0 0 0 0  1 0 0 0 0  0 0 0 0 1" result="nn"/><feComposite in="nn" in2="bd" operator="arithmetic" k1="0" k2="1" k3="0.22" k4="-0.125"/><feComponentTransfer><feFuncR type="discrete" tableValues="0 0 0 0 0 0 0 0 0.39 0.39 0.39 0.39 0.39 0.39 0.39 0.39 0.66 0.66 0.66 0.66 0.66 0.66 1 1 1 1 1 1 1 1 1 1"/><feFuncG type="discrete" tableValues="0 0 0 0 0 0 0 0 0.39 0.39 0.39 0.39 0.39 0.39 0.39 0.39 0.66 0.66 0.66 0.66 0.66 0.66 1 1 1 1 1 1 1 1 1 1"/><feFuncB type="discrete" tableValues="0 0 0 0 0 0 0 0 0.39 0.39 0.39 0.39 0.39 0.39 0.39 0.39 0.66 0.66 0.66 0.66 0.66 0.66 1 1 1 1 1 1 1 1 1 1"/></feComponentTransfer></filter><rect width="640" height="512" filter="url(#nz)"/><circle cx="54.8" cy="24" r="1.5" fill="#fff"/><circle cx="49" cy="36" r="2.2" fill="#fff"/><circle cx="24.4" cy="73" r="2.6" fill="#fff"/><circle cx="363" cy="52" r="1.4" fill="#fff"/><circle cx="76.5" cy="167" r="1.6" fill="#fff"/><circle cx="146.6" cy="23" r="1.2" fill="#fff"/><circle cx="572" cy="68" r="1.3" fill="#fff"/><circle cx="23.4" cy="235" r="1.3" fill="#fff"/><circle cx="91" cy="283" r="1.3" fill="#fff"/><circle cx="300" cy="470" r="1.4" fill="#fff"/><circle cx="520" cy="430" r="1.5" fill="#fff"/><circle cx="610" cy="300" r="1.3" fill="#fff"/><circle cx="180" cy="420" r="1.2" fill="#fff"/></svg></div>
<div style="left:648px;top:29px;width:4px;height:512px;background:#e8ebf0"></div>
<div style="left:6px;top:541px;width:647px;height:5px;background:linear-gradient(#f4f5f9,#e4e6ef);border-bottom:1px solid #a9afcf"></div>
<div style="left:6px;top:546px;width:648px;height:25px;background:linear-gradient(#f1f2f7 0,#e6e8f0 35%,#dfe2ec 100%)"></div>
<div style="left:181px;top:549px;width:1px;height:20px;background:#b9bed6;box-shadow:1px 0 0 #fafbfd"></div>
<div style="left:256px;top:549px;width:1px;height:20px;background:#b9bed6;box-shadow:1px 0 0 #fafbfd"></div>
<div style="left:305px;top:549px;width:1px;height:20px;background:#b9bed6;box-shadow:1px 0 0 #fafbfd"></div>
<div style="left:356px;top:549px;width:1px;height:20px;background:#b9bed6;box-shadow:1px 0 0 #fafbfd"></div>
<div style="left:433px;top:549px;width:1px;height:20px;background:#b9bed6;box-shadow:1px 0 0 #fafbfd"></div>
<div style="left:544px;top:549px;width:1px;height:20px;background:#b9bed6;box-shadow:1px 0 0 #fafbfd"></div>
<div style="left:634px;top:549px;width:1px;height:20px;background:#b9bed6;box-shadow:1px 0 0 #fafbfd"></div>
<div style="left:640px;top:549px;width:1px;height:20px;background:#b9bed6;box-shadow:1px 0 0 #fafbfd"></div>
<span class="t" style="left:184.00px;top:551.74px;font-size:12px;color:#15101c;transform:scaleX(0.8841);">2.0 s</span>
<span class="t" style="left:259.00px;top:551.74px;font-size:12px;color:#15101c;transform:scaleX(0.9119);">Bin:1x1</span>
<span class="t" style="left:309.00px;top:551.74px;font-size:12px;color:#15101c;transform:scaleX(0.9288);">0.0°C</span>
<span class="t" style="left:359.00px;top:551.74px;font-size:12px;color:#15101c;transform:scaleX(1.0045);">MX=0 MY=0</span>
<span class="t" style="left:437.00px;top:551.74px;font-size:12px;color:#15101c;transform:scaleX(0.9872);">Filt.=</span>
<span class="t" style="left:547.50px;top:551.74px;font-size:12px;color:#15101c;transform:scaleX(0.9705);">Foc=800.0 mm</span>
</div><div style="left:0;top:0;right:0;bottom:0;border:1px solid rgba(110,120,180,.38);border-bottom-color:rgba(20,22,60,.5);border-radius:4px 4px 0 0"></div></div>
<div class="win" style="left:758px;top:79px;width:398px;height:299.5px;"><div class="tb" style="height:28px"></div><div style="left:0;top:1px;width:398px;height:298.5px">
<svg style="left:5px;top:4.8px" width="16" height="16" viewBox="0 0 17 17"><defs><linearGradient id="rb5004" x1="0" y1="0" x2="0" y2="1"><stop offset="0" stop-color="#e01000"/><stop offset=".18" stop-color="#ff3000"/><stop offset=".4" stop-color="#ffd800"/><stop offset=".6" stop-color="#30d830"/><stop offset=".8" stop-color="#10b0e0"/><stop offset="1" stop-color="#1030b0"/></linearGradient></defs><path d="M2.2 13 L7.6 2.4 Q8.5 1.2 9.4 2.4 L14.8 13" fill="none" stroke="url(#rb5004)" stroke-width="1.9" stroke-linejoin="round" stroke-linecap="round"/><path d="M1.6 13.3 Q8.5 15.6 15.4 13.3" fill="none" stroke="#0a0e58" stroke-width="2.2" stroke-linecap="round"/><path d="M2 14.6 Q8.5 16.8 15 14.6" fill="none" stroke="#10123a" stroke-width="1" stroke-linecap="round" opacity=".8"/></svg>
<span class="t" style="left:25.00px;top:7.77px;font-size:11.5px;color:#4f5688;font-weight:bold;transform:scaleX(1.0328);">Resultats de calibration</span>
<svg style="left:0;top:0" width="1" height="1"><path d="M359.95 16.0 h7.5" stroke="#5f6696" stroke-width="2.3"/><path d="M379.29999999999995 8.3 l8.2 8.2 M387.5 8.3 l-8.2 8.2" stroke="#5f6696" stroke-width="2.3"/></svg>
<div style="left:7px;top:28px;width:384px;height:16px;background:#fff"></div>
<div style="left:7px;top:44px;width:384px;height:248px;background:#e8ebf0"></div>
</div><div style="left:0;top:0;right:0;bottom:0;border:1px solid rgba(110,120,180,.38);border-bottom-color:rgba(20,22,60,.5);border-radius:4px 4px 0 0"></div></div>
<div style="left:944.5px;top:124px;width:204.5px;height:464.5px;background:#2a2d58;overflow:hidden">
<div style="left:0px;top:0px;width:204.5px;height:20px;background:linear-gradient(#2d3060,#282b57)"></div>
<span class="t" style="left:-21.70px;top:4.97px;font-size:11.5px;color:#4f5688;font-weight:bold;transform:scaleX(1.0267);">Controle du télescope</span>
<svg style="left:0;top:0" width="1" height="1"><path d="M186.20000000000005 6 l8 8 M194.20000000000005 6 l-8 8" stroke="#cdd0e6" stroke-width="2.1"/></svg>
<div style="left:5px;top:20px;width:194px;height:438.4px;background:#e8ebf0"></div>
<div style="left:6.5px;top:39.5px;width:191.5px;height:417.5px;border:1px solid #b4b9d3;box-shadow:inset 1px 1px 0 #fafbfd"></div>
<div style="left:9.5px;top:22px;width:54px;height:18px;background:linear-gradient(#dfe1ee,#cbcfe2);border:1px solid #a9afcf;border-bottom:none;border-radius:4px 4px 0 0"></div>
<span class="t" style="left:16.50px;top:25.89px;font-size:11px;color:#434a72;transform:scaleX(0.8479);">Equatorial</span>
<div style="left:65px;top:22px;width:51px;height:18px;background:linear-gradient(#dfe1ee,#cbcfe2);border:1px solid #a9afcf;border-bottom:none;border-radius:4px 4px 0 0"></div>
<span class="t" style="left:71.40px;top:25.89px;font-size:11px;color:#434a72;transform:scaleX(0.9317);">Azimutal</span>
<div style="left:117.5px;top:22px;width:52px;height:18px;background:linear-gradient(#dfe1ee,#cbcfe2);border:1px solid #a9afcf;border-bottom:none;border-radius:4px 4px 0 0"></div>
<span class="t" style="left:123.20px;top:25.89px;font-size:11px;color:#434a72;transform:scaleX(0.9315);">Geneurs</span>
<div class="btn" style="left:166.5px;top:21px;width:15.6px;height:16px;border-color:#b7bcd6;background:linear-gradient(#f7f8fb,#e2e4ee)"></div>
<div class="btn" style="left:183.1px;top:21px;width:15.6px;height:16px;border-color:#b7bcd6;background:linear-gradient(#f7f8fb,#e2e4ee)"></div>
<svg style="left:0;top:0" width="1" height="1"><path d="M176.29999999999995 25.5 v7 l-4 -3.5 z M189.0999999999999 25.5 v7 l4 -3.5 z" fill="#4a5286"/></svg>
<div class="pn" style="left:9.5px;top:47px;width:168.5px;height:16.5px;"></div>
<span class="t" style="left:22.50px;top:49.29px;font-size:11px;color:#434a72;transform:scaleX(0.9426);">Temps sidéral local : 17h09m16s</span>
<div style="left:179.8px;top:48px;width:17.2px;height:21px;overflow:hidden"><div class="btn" style="left:0;top:0;width:22px;height:20.6px;border-color:#9aa1c6"></div></div>
<svg style="left:0;top:0" width="1" height="1"><path d="M187.20000000000005 51 h5 v5.6 h4.2 l-6.7 6 l-6.7 -6 h4.2 z" fill="#ee0000"/><path d="M182.5 64.19999999999999 h13.8" stroke="#ee0000" stroke-width="1.8"/></svg>
<div style="left:9.5px;top:74.7px;width:185.8px;height:39.1px;border:1px solid #c3c7da;border-radius:4px;box-shadow:inset 1px 1px 0 #fafbfd,1px 1px 0 #fafbfd"></div>
<div style="left:15.5px;top:69px;width:76.5px;height:12px;background:#e8ebf0"></div>
<span class="t" style="left:21.10px;top:68.19px;font-size:11px;color:#434a72;transform:scaleX(0.9538);">Equinoxe 2000</span>
<span class="t" style="left:25.25px;top:84.89px;font-size:11px;color:#434a72;">Alpha :</span>
<span class="t" style="left:16.10px;top:99.99px;font-size:11px;color:#434a72;transform:scaleX(0.9210);">Déclinaison :</span>
<span class="t" style="left:94.90px;top:84.89px;font-size:11px;color:#434a72;transform:scaleX(0.9583);">18h36m43.771s</span>
<span class="t" style="left:94.90px;top:99.99px;font-size:11px;color:#434a72;transform:scaleX(0.9911);">+33°11'43.07"</span>
<div style="left:9.5px;top:123.5px;width:185.8px;height:40.3px;border:1px solid #c3c7da;border-radius:4px;box-shadow:inset 1px 1px 0 #fafbfd,1px 1px 0 #fafbfd"></div>
<span class="t" style="left:25.25px;top:130.19px;font-size:11px;color:#434a72;">Alpha :</span>
<span class="t" style="left:16.10px;top:148.79px;font-size:11px;color:#434a72;transform:scaleX(0.9210);">Déclinaison :</span>
<span class="t" style="left:95.50px;top:130.19px;font-size:11px;color:#434a72;transform:scaleX(0.9507);">18h37m18.604s</span>
<span class="t" style="left:95.50px;top:148.79px;font-size:11px;color:#434a72;transform:scaleX(0.9634);">+33°12'56.51"</span>
<div class="pn" style="left:9.5px;top:168px;width:78.7px;height:15.7px;"></div>
<div class="pn" style="left:90.7px;top:168px;width:104.8px;height:15.7px;"></div>
<span class="t" style="left:18.50px;top:170.99px;font-size:11px;color:#434a72;transform:scaleX(0.9781);">Angle horaire</span>
<span class="t" style="left:116.30px;top:170.99px;font-size:11px;color:#434a72;transform:scaleX(0.9338);">-01h27m27s</span>
<div class="pn" style="left:9.5px;top:188px;width:78.7px;height:16px;"></div>
<div class="pn" style="left:90.7px;top:188px;width:104.8px;height:16px;"></div>
<span class="t" style="left:25.90px;top:191.49px;font-size:11px;color:#434a72;transform:scaleX(0.9619);">Coté du pied</span>
<span class="t" style="left:105.10px;top:191.49px;font-size:11px;color:#434a72;font-weight:bold;transform:scaleX(1.0759);">Ouest du pied</span>
<div class="pn" style="left:9.5px;top:208px;width:78.7px;height:16px;"></div>
<div class="pn" style="left:90.7px;top:208px;width:104.8px;height:16px;"></div>
<span class="t" style="left:41.90px;top:210.99px;font-size:11px;color:#434a72;transform:scaleX(0.9228);">Masse air</span>
<span class="t" style="left:125.30px;top:210.99px;font-size:11px;color:#434a72;transform:scaleX(0.9532);">1.06252</span>
<div class="pn" style="left:9.5px;top:229.8px;width:78.7px;height:16px;"></div>
<div class="pn" style="left:90.7px;top:229.8px;width:104.8px;height:16px;"></div>
<span class="t" style="left:46.00px;top:232.49px;font-size:11px;color:#434a72;transform:scaleX(0.9279);">Date UT</span>
<span class="t" style="left:93.20px;top:232.49px;font-size:11px;color:#434a72;transform:scaleX(1.0097);">22/05/2016 01:08:16</span>
<div style="left:11.5px;top:254.4px;width:178.2px;height:178.6px;background:#000;border:1px solid #c0c4d8;border-right-color:#fff;border-bottom-color:#fff;border-width:2px"></div>
<svg style="left:0;top:0" width="1" height="1" font-family="Liberation Sans, sans-serif"><defs><radialGradient id="pg"><stop offset="0" stop-color="#000"/><stop offset=".755" stop-color="#000"/><stop offset=".80" stop-color="#1a1a1a"/><stop offset=".86" stop-color="#525252"/><stop offset=".92" stop-color="#9a9a9a"/><stop offset=".97" stop-color="#dadada"/><stop offset="1" stop-color="#f4f4f4"/></radialGradient></defs><circle cx="100.90000000000009" cy="344.6" r="78" fill="url(#pg)"/><circle cx="100.90000000000009" cy="344.6" r="55" fill="none" stroke="#fff" stroke-width="1" stroke-dasharray="3.3 3"/><circle cx="100.90000000000009" cy="344.6" r="38.7" fill="none" stroke="#fff" stroke-width="1" stroke-dasharray="3.3 3"/><path d="M22.90000000000009 344.5 h156 M101.0 266.6 v156" stroke="#fff" stroke-width="1" stroke-dasharray="3.3 2.6"/><path d="M85.09999999999991 403 q-5.5 6.5 0 13.5 q2.2 0.3 3 -0.8 q-5 -5.6 -1.6 -12.4z" fill="#c2c2c2"/><rect x="121.5" y="349.8" width="8.8" height="8.8" fill="none" stroke="#f00" stroke-width="1.2"/><rect x="124.09999999999991" y="352.4" width="3.6" height="3.6" fill="none" stroke="#f00" stroke-width="1.1"/><rect x="93.90000000000009" y="259.5" width="14.099999999999909" height="10.699999999999989" fill="#000" stroke="#fff" stroke-width="1"/><text x="100.95000000000005" y="268.3" font-size="10" font-weight="bold" fill="#fff" text-anchor="middle">N</text><rect x="93.90000000000009" y="417.5" width="14.099999999999909" height="10.799999999999955" fill="#000" stroke="#fff" stroke-width="1"/><text x="100.95000000000005" y="426.4" font-size="10" font-weight="bold" fill="#fff" text-anchor="middle">S</text><rect x="173.0" y="338.3" width="13.299999999999955" height="11.099999999999966" fill="#000" stroke="#fff" stroke-width="1"/><text x="179.6500000000001" y="347.5" font-size="10" font-weight="bold" fill="#fff" text-anchor="middle">E</text><rect x="89.70000000000005" y="282.3" width="21.399999999999864" height="11.099999999999966" fill="#000" stroke="#fff" stroke-width="1"/><text x="101.20000000000009" y="291.09999999999997" font-size="9.6" font-weight="normal" fill="#fff" text-anchor="middle">45°</text><rect x="89.70000000000005" y="298.7" width="21.399999999999864" height="10.900000000000034" fill="#000" stroke="#fff" stroke-width="1"/><text x="101.20000000000009" y="307.3" font-size="9.6" font-weight="normal" fill="#fff" text-anchor="middle">60°</text></svg>
<div class="pn" style="left:12.9px;top:436.6px;width:43.6px;height:16px;"></div>
<div class="pn" style="left:59.7px;top:436.6px;width:135.6px;height:16px;"></div>
<span class="t" style="left:17.00px;top:439.09px;font-size:11px;color:#434a72;transform:scaleX(0.9462);">Etat :</span>
<span class="t" style="left:95.10px;top:439.09px;font-size:11px;color:#434a72;transform:scaleX(0.9593);">En attente......</span>
</div>
<div style="left:751px;top:105px;width:259px;height:429px;background:#2a2d58;overflow:hidden">
<div style="left:0px;top:0px;width:259px;height:20px;background:linear-gradient(#2d3060,#282b57)"></div>
<span class="t" style="left:4.20px;top:4.87px;font-size:11.5px;color:#4f5688;font-weight:bold;transform:scaleX(0.9773);">Orion SSAG Camera</span>
<svg style="left:0;top:0" width="1" height="1"><path d="M240.5 5.5 l8 8 M248.5 5.5 l-8 8" stroke="#cdd0e6" stroke-width="2.1"/></svg>
<div style="left:4px;top:19.5px;width:249px;height:403px;background:#e8ebf0"></div>
<div style="left:6px;top:40px;width:246px;height:382px;border-top:1px solid #b4b9d3"></div>
<div style="left:6.3px;top:21px;width:151.3px;height:20px;background:linear-gradient(#fbfbfd,#f1f2f7);border:1px solid #a9afcf;border-bottom:none;border-radius:4px 4px 0 0"></div>
<span class="t" style="left:11.80px;top:25.19px;font-size:11px;color:#000;transform:scaleX(0.9433);">ASCOM_Orion SSAG Camera</span>
<div class="btn" style="left:9.4px;top:45.5px;width:239.2px;height:17.1px;border-color:#8f96bf;background:linear-gradient(#eceef5,#dfe1ec 45%,#cdd0e2)"></div>
<span class="t" style="left:98.40px;top:49.67px;font-size:11.5px;color:#000;transform:scaleX(0.9330);">DEMARRER</span>
<div class="btn" style="left:9.4px;top:65.7px;width:239.2px;height:17.2px;border-color:#b4b9d6;background:linear-gradient(#f0f1f7,#e4e6ef 50%,#dcdfeb)"></div>
<span class="t" style="left:94.80px;top:69.57px;font-size:11.5px;color:#a3a7b8;transform:scaleX(0.8404);">ABANDONNER</span>
<span class="t" style="left:12.80px;top:90.09px;font-size:11px;color:#434a72;transform:scaleX(0.9449);">Temps:</span>
<div style="left:13px;top:113px;width:229px;height:1px;background:#b9bed6;box-shadow:0 1px 0 #fafbfd"></div>
<span class="t" style="left:12.80px;top:123.69px;font-size:11px;color:#434a72;transform:scaleX(0.9514);">Pose en sec.</span>
<div class="ed" style="left:79px;top:120px;width:47.5px;height:19.5px;"></div>
<span class="t" style="left:81.60px;top:124.69px;font-size:11px;color:#000;">2</span>
<div style="left:110.5px;top:121px;width:15px;height:17.5px;background:linear-gradient(#eef0f6,#d6d9e8);border-left:1px solid #c0c5dc"></div>
<svg style="left:0;top:0" width="1" height="1"><path d="M114.79999999999995 128.15 l3.4 -3.8 l3.4 3.8 z M114.79999999999995 131.55 l3.4 3.8 l3.4 -3.8 z" fill="#5a6190"/></svg>
<span class="t" style="left:134.70px;top:120.69px;font-size:11px;color:#000;transform:scaleX(0.9702);">Bouclage</span>
<div class="ed" style="left:205.6px;top:118.4px;width:13.2px;height:13.2px;border-color:#b6bbd5"></div>
<div class="btn" style="left:227px;top:119.4px;width:17.6px;height:16.8px;border-color:#b9bed8;background:linear-gradient(#f0f1f7,#e0e3ee)"></div>
<svg style="left:0;top:0" width="1" height="1"><path d="M231.5 123.5 l8.5 8.5 M240 123.5 l-8.5 8.5" stroke="#a9adc0" stroke-width="1.1"/></svg>
<span class="t" style="left:134.70px;top:137.89px;font-size:11px;color:#000;transform:scaleX(0.9546);">Bouclage infini</span>
<div class="ed" style="left:205.6px;top:135.5px;width:13.2px;height:13.3px;border-color:#b6bbd5"></div>
<span class="t" style="left:12.80px;top:157.69px;font-size:11px;color:#434a72;transform:scaleX(0.9638);">Nbre de boucles</span>
<div class="ed" style="left:95px;top:153px;width:52px;height:20px;"></div>
<span class="t" style="left:97.60px;top:156.89px;font-size:11px;color:#000;">10</span>
<div style="left:132px;top:154.5px;width:13.5px;height:8.5px;background:linear-gradient(#f5f6fa,#d4d7e6);border:1px solid #b7bcd6;border-radius:4px"></div>
<div style="left:132px;top:163px;width:13.5px;height:8.5px;background:linear-gradient(#f5f6fa,#d4d7e6);border:1px solid #b7bcd6;border-radius:4px"></div>
<svg style="left:0;top:0" width="1" height="1"><path d="M134.75 161.0 l4 -4.4 l4 4.4 z M134.75 165.2 l4 4.4 l4 -4.4 z" fill="#000"/></svg>
<span class="t" style="left:153.50px;top:157.69px;font-size:11px;color:#434a72;transform:scaleX(0.9353);">Délai (s)</span>
<div class="ed" style="left:201.7px;top:153px;width:36.9px;height:20px;"></div>
<span class="t" style="left:204.30px;top:156.89px;font-size:11px;color:#000;">2</span>
<div style="left:223.6px;top:154.5px;width:13.5px;height:8.5px;background:linear-gradient(#f5f6fa,#d4d7e6);border:1px solid #b7bcd6;border-radius:4px"></div>
<div style="left:223.6px;top:163px;width:13.5px;height:8.5px;background:linear-gradient(#f5f6fa,#d4d7e6);border:1px solid #b7bcd6;border-radius:4px"></div>
<svg style="left:0;top:0" width="1" height="1"><path d="M226.35000000000002 161.0 l4 -4.4 l4 4.4 z M226.35000000000002 165.2 l4 4.4 l4 -4.4 z" fill="#000"/></svg>
<div style="left:13px;top:182.5px;width:229px;height:1px;background:#b9bed6;box-shadow:0 1px 0 #fafbfd"></div>
<span class="t" style="left:12.80px;top:192.29px;font-size:11px;color:#434a72;transform:scaleX(0.9128);">BinX:</span>
<div class="ed" style="left:43px;top:189px;width:37px;height:19.3px;"></div>
<span class="t" style="left:45.60px;top:193.19px;font-size:11px;color:#000;">1</span>
<div style="left:65px;top:190.5px;width:13.5px;height:8.15px;background:linear-gradient(#f5f6fa,#d4d7e6);border:1px solid #b7bcd6;border-radius:4px"></div>
<div style="left:65px;top:198.65px;width:13.5px;height:8.15px;background:linear-gradient(#f5f6fa,#d4d7e6);border:1px solid #b7bcd6;border-radius:4px"></div>
<svg style="left:0;top:0" width="1" height="1"><path d="M67.75 196.64999999999998 l4 -4.4 l4 4.4 z M67.75 200.84999999999997 l4 4.4 l4 -4.4 z" fill="#000"/></svg>
<span class="t" style="left:92.50px;top:192.29px;font-size:11px;color:#434a72;transform:scaleX(0.9383);">BinY:</span>
<div class="ed" style="left:128px;top:189px;width:37px;height:19.3px;"></div>
<span class="t" style="left:130.60px;top:193.19px;font-size:11px;color:#000;">1</span>
<div style="left:150px;top:190.5px;width:13.5px;height:8.15px;background:linear-gradient(#f5f6fa,#d4d7e6);border:1px solid #b7bcd6;border-radius:4px"></div>
<div style="left:150px;top:198.65px;width:13.5px;height:8.15px;background:linear-gradient(#f5f6fa,#d4d7e6);border:1px solid #b7bcd6;border-radius:4px"></div>
<svg style="left:0;top:0" width="1" height="1"><path d="M152.75 196.64999999999998 l4 -4.4 l4 4.4 z M152.75 200.84999999999997 l4 4.4 l4 -4.4 z" fill="#000"/></svg>
<div style="left:183px;top:191px;width:14.4px;height:14px;background:linear-gradient(#f9a060,#ee7a35);border:1px solid #c8602a;border-radius:3px"></div>
<svg style="left:0;top:0" width="1" height="1"><path d="M186 198 l2.8 3.4 l5.4 -7.4" fill="none" stroke="#6a2a12" stroke-width="2.1"/></svg>
<span class="t" style="left:202.00px;top:193.79px;font-size:11px;color:#000;transform:scaleX(0.9159);">Lier</span>
<div class="btn" style="left:14.4px;top:216.4px;width:72.6px;height:22.6px;border-color:#9097c0;background:linear-gradient(#f0f1f7,#e2e4ee 45%,#cfd2e3)"></div>
<span class="t" style="left:22.20px;top:223.49px;font-size:11px;color:#000;transform:scaleX(0.9708);">Exp Longue</span>
<div class="btn" style="left:94.5px;top:216.4px;width:72.5px;height:22.6px;border-color:#9097c0;background:linear-gradient(#f0f1f7,#e2e4ee 45%,#cfd2e3)"></div>
<span class="t" style="left:103.75px;top:223.49px;font-size:11px;color:#000;transform:scaleX(0.9705);">Exp. courte</span>
<div class="btn" style="left:174.3px;top:216.4px;width:72.5px;height:22.6px;border-color:#9097c0;background:linear-gradient(#f0f1f7,#e2e4ee 45%,#cfd2e3)"></div>
<span class="t" style="left:186.05px;top:223.49px;font-size:11px;color:#000;transform:scaleX(0.9891);">Sequence</span>
<div style="left:23.6px;top:242px;width:209.4px;height:14.8px;background:#6cf89c"></div>
<span class="t" style="left:89.50px;top:244.09px;font-size:11px;color:#3a6a8c;transform:scaleX(0.9480);">Caméra secondaire</span>
<div style="left:8.8px;top:279.5px;width:240.7px;height:139px;border:1px solid #b4b9d3;background:#e9ebf1;box-shadow:inset 1px 1px 0 #fafbfd"></div>
<div style="left:10.4px;top:263px;width:47.4px;height:16.5px;background:linear-gradient(#dfe1ee,#cbcfe2);border:1px solid #a9afcf;border-bottom:none;border-radius:4px 4px 0 0;overflow:hidden"></div>
<span class="t" style="left:16.10px;top:266.49px;font-size:11px;color:#434a72;transform:scaleX(0.9202);">Camera</span>
<div style="left:59px;top:263px;width:46.6px;height:16.5px;background:linear-gradient(#dfe1ee,#cbcfe2);border:1px solid #a9afcf;border-bottom:none;border-radius:4px 4px 0 0;overflow:hidden"></div>
<span class="t" style="left:64.30px;top:266.49px;font-size:11px;color:#434a72;transform:scaleX(0.9497);">Options</span>
<div style="left:158.8px;top:263px;width:57.7px;height:16.5px;background:linear-gradient(#dfe1ee,#cbcfe2);border:1px solid #a9afcf;border-bottom:none;border-radius:4px 4px 0 0;overflow:hidden"></div>
<span class="t" style="left:164.80px;top:266.49px;font-size:11px;color:#434a72;transform:scaleX(0.9450);">Information</span>
<div style="left:106.7px;top:260px;width:51.1px;height:20.5px;background:linear-gradient(#fbfbfd,#eef0f5);border:1px solid #a9afcf;border-bottom:none;border-radius:4px 4px 0 0;overflow:hidden"></div>
<span class="t" style="left:112.75px;top:265.49px;font-size:11px;color:#000;transform:scaleX(0.9378);">Guidage</span>
<div class="btn" style="left:217.5px;top:262px;width:15.4px;height:15.6px;border-color:#b7bcd6;background:linear-gradient(#f7f8fb,#e2e4ee)"></div>
<div class="btn" style="left:234.4px;top:262px;width:15.4px;height:15.6px;border-color:#b7bcd6;background:linear-gradient(#f7f8fb,#e2e4ee)"></div>
<svg style="left:0;top:0" width="1" height="1"><path d="M227.39999999999998 266.5 v7 l-4 -3.5 z M240.20000000000005 266.5 v7 l4 -3.5 z" fill="#4a5286"/></svg>
<div class="btn2" style="left:16px;top:288.3px;width:119.7px;height:23.7px;"></div>
<span class="t" style="left:51.10px;top:295.94px;font-size:11px;color:#000;transform:scaleX(0.9414);">Calibration</span>
<div class="btn2" style="left:140px;top:288.3px;width:99.6px;height:23.7px;"></div>
<span class="t" style="left:156.55px;top:295.94px;font-size:11px;color:#000;transform:scaleX(0.9376);">Calibration AO</span>
<div class="btn2" style="left:16px;top:317.6px;width:119.7px;height:23.4px;"></div>
<span class="t" style="left:32.85px;top:325.09px;font-size:11px;color:#000;transform:scaleX(0.9441);">Démarrer Guidage</span>
<div class="btn2" style="left:140px;top:317.6px;width:99.6px;height:23.4px;"></div>
<span class="t" style="left:155.30px;top:325.09px;font-size:11px;color:#000;transform:scaleX(0.9646);">Cal. Sharplock</span>
<div class="btn2" style="left:16px;top:342.7px;width:119.7px;height:23.7px;"></div>
<span class="t" style="left:54.35px;top:350.34px;font-size:11px;color:#a3a7b8;transform:scaleX(0.9764);">Abandon</span>
<div class="ed" style="left:17.7px;top:372.4px;width:13.2px;height:13.2px;border-color:#b6bbd5"></div>
<span class="t" style="left:35.80px;top:375.09px;font-size:11px;color:#000;transform:scaleX(0.9621);">Trouver l'étoile de guidage automatiquement</span>
<span class="t" style="left:15.40px;top:397.69px;font-size:11px;color:#3f5388;transform:scaleX(0.9608);">Port de guidage : ASCOM compliant guider</span>
</div>
<div class="win" style="left:130px;top:209px;width:598px;height:412px"><div class="tb" style="height:28px"></div><div style="left:0;top:1px;width:598px;height:411px">
<svg style="left:5px;top:5px" width="17" height="17" viewBox="0 0 17 17"><circle cx="8.5" cy="8.5" r="6.6" fill="#c4c4c4" stroke="#2a2a2a" stroke-width="2.4" stroke-dasharray="2.4 1.75"/><circle cx="8.5" cy="8.5" r="5.7" fill="#c8c8c8"/><path d="M8.5 4.5 v8 M4.5 8.5 h8" stroke="#111" stroke-width="1.2"/><rect x="6" y="6" width="5" height="5" fill="none" stroke="#111" stroke-width="1"/></svg>
<span class="t" style="left:25.50px;top:7.47px;font-size:11.5px;color:#fff;font-weight:bold;transform:scaleX(1.0266);">Rapport de calibration</span>
<svg style="left:0;top:0" width="1" height="1"><path d="M559.55 16.000000000000007 h7.5" stroke="#e6e8f2" stroke-width="2.3"/><path d="M579.3 8.300000000000006 l8.2 8.2 M587.5 8.300000000000006 l-8.2 8.2" stroke="#e6e8f2" stroke-width="2.3"/></svg>
<div style="left:6px;top:27px;width:586px;height:378px;background:#e8ebf0"></div>
<div style="left:9px;top:30px;width:580px;height:328px;background:#fff;border:1px solid #000"></div>
<svg style="left:-130px;top:-210px" width="1" height="1" font-family="Liberation Sans, sans-serif"><path d="M188.5 316.5 H669.5" stroke="#adadad" stroke-width="1"/><path d="M188.5 402.5 H669.5" stroke="#adadad" stroke-width="1"/><path d="M188.5 487.5 H669.5" stroke="#adadad" stroke-width="1"/><path d="M358.5 289.5 V519.5" stroke="#b4b4b4" stroke-width="1"/><path d="M529 289.5 V519.5" stroke="#b4b4b4" stroke-width="1"/><rect x="188.5" y="289.5" width="481.0" height="230.0" fill="none" stroke="#000" stroke-width="1"/><path d="M188.5 513.50 h-4 M188.5 504.50 h-4 M188.5 496.50 h-4 M188.5 487.50 h-9.5 M188.5 479.50 h-4 M188.5 470.50 h-4 M188.5 461.50 h-4 M188.5 453.50 h-4 M188.5 444.50 h-4 M188.5 436.50 h-4 M188.5 427.50 h-4 M188.5 419.50 h-4 M188.5 410.50 h-4 M188.5 401.50 h-9.5 M188.5 393.50 h-4 M188.5 384.50 h-4 M188.5 376.50 h-4 M188.5 367.50 h-4 M188.5 359.50 h-4 M188.5 350.50 h-4 M188.5 341.50 h-4 M188.5 333.50 h-4 M188.5 324.50 h-4 M188.5 316.50 h-9.5 M188.5 307.50 h-4 M188.5 299.50 h-4 M188.5 290.50 h-4" stroke="#000" stroke-width="1"/><path d="M188.50 519.5 v8.5 M205.50 519.5 v4 M222.50 519.5 v4 M239.50 519.5 v4 M256.50 519.5 v4 M273.50 519.5 v4 M290.50 519.5 v4 M307.50 519.5 v4 M324.50 519.5 v4 M341.50 519.5 v4 M358.50 519.5 v8.5 M375.50 519.5 v4 M392.50 519.5 v4 M409.50 519.5 v4 M426.50 519.5 v4 M443.50 519.5 v4 M460.50 519.5 v4 M477.50 519.5 v4 M494.50 519.5 v4 M511.50 519.5 v4 M528.50 519.5 v8.5 M546.50 519.5 v4 M563.50 519.5 v4 M580.50 519.5 v4 M597.50 519.5 v4 M614.50 519.5 v4 M631.50 519.5 v4 M648.50 519.5 v4 M665.50 519.5 v4" stroke="#000" stroke-width="1"/><polyline points="616.4,432.5 669.5,292.6 282.6,289.6 187.9,482.2 402,519.6" fill="none" stroke="#000" stroke-width="2.1" stroke-linejoin="round"/><circle cx="616.4" cy="432.5" r="8.8" fill="none" stroke="#000" stroke-width="2"/><circle cx="669.5" cy="292.6" r="8.8" fill="none" stroke="#000" stroke-width="2"/><circle cx="282.6" cy="289.6" r="8.8" fill="none" stroke="#000" stroke-width="2"/><circle cx="187.9" cy="482.2" r="8.8" fill="none" stroke="#000" stroke-width="2"/><circle cx="402" cy="519.6" r="8.8" fill="none" stroke="#000" stroke-width="2"/></svg>
<span class="t" style="left:57.70px;top:56.19px;font-size:11px;color:#000;transform:scaleX(0.9645);">Rapport de calibration</span>
<span class="t" style="left:24.15px;top:101.69px;font-size:11px;color:#000;">760</span>
<span class="t" style="left:24.15px;top:187.39px;font-size:11px;color:#000;">759</span>
<span class="t" style="left:24.15px;top:272.99px;font-size:11px;color:#000;">758</span>
<span class="t" style="left:50.32px;top:324.49px;font-size:11px;color:#000;">740</span>
<span class="t" style="left:219.32px;top:324.49px;font-size:11px;color:#000;">741</span>
<span class="t" style="left:389.82px;top:324.49px;font-size:11px;color:#000;">742</span>
<span class="t" style="left:274.60px;top:341.09px;font-size:11px;color:#000;transform:scaleX(0.9944);">X (Pixels)</span>
<span class="t" style="left:553.80px;top:146.09px;font-size:11px;color:#000;">Y</span>
<span class="t" style="left:554.30px;top:175.59px;font-size:11px;color:#000;">P</span>
<span class="t" style="left:554.30px;top:185.79px;font-size:11px;color:#000;">i</span>
<span class="t" style="left:554.30px;top:195.59px;font-size:11px;color:#000;">x</span>
<span class="t" style="left:554.30px;top:205.79px;font-size:11px;color:#000;">e</span>
<span class="t" style="left:554.30px;top:215.79px;font-size:11px;color:#000;">l</span>
<span class="t" style="left:554.30px;top:225.99px;font-size:11px;color:#000;">s</span>
<span class="t" style="left:170.50px;top:99.44px;font-size:8.7px;color:#000;">3</span>
<span class="t" style="left:76.00px;top:292.44px;font-size:8.7px;color:#000;">2</span>
<span class="t" style="left:504.00px;top:241.84px;font-size:8.7px;color:#000;">5</span>
<div style="left:7px;top:364px;width:72px;height:20.6px;"></div>
<div class="btn" style="left:7px;top:364px;width:72px;height:20.6px"></div>
<span class="t" style="left:20.00px;top:369.99px;font-size:11px;color:#15101c;transform:scaleX(0.9898);">Réglages</span>
<div style="left:6px;top:387.5px;width:586px;height:17.5px;background:linear-gradient(#f3f4f8,#e3e5ee);border-top:1px solid #fbfbfd"></div>
<div style="left:155px;top:388px;width:1px;height:16px;background:#b9bed6;box-shadow:1px 0 0 #fafbfd"></div>
<span class="t" style="left:7.00px;top:391.44px;font-size:12px;color:#15101c;transform:scaleX(0.9122);">581x330</span>
<svg style="left:0;top:0" width="1" height="1"><path d="M588 390 v11 h-11 z" fill="#4a5286"/><path d="M576 388.5 v16" stroke="#c3c7da"/></svg>
</div><div style="left:0;top:0;right:0;bottom:0;border:1px solid rgba(110,120,180,.38);border-bottom-color:rgba(20,22,60,.5);border-radius:4px 4px 0 0"></div></div>
<div style="left:0px;top:701px;width:1366px;height:27px;background:linear-gradient(#dcdfe9 0,#f2f3f7 2px,#e9ebf1 40%,#e4e6ee 100%)"></div>
<div style="left:0px;top:700px;width:160px;height:24.5px;background:linear-gradient(#3b3f72,#282b57);border-radius:0 0 4px 4px"></div>
<span class="t" style="left:5.00px;top:704.04px;font-size:12px;color:#fff;font-weight:bold;transform:scaleX(0.9761);">Controle du télescope</span>
<svg style="left:0;top:0" width="1" height="1"><path d="M141 705.5 l8 8 M149 705.5 l-8 8" stroke="#dfe1ee" stroke-width="1.8"/><path d="M1357 710 v10.2 h-9.6 z" fill="#4a5286"/></svg>
<span class="t" style="left:160.50px;top:705.74px;font-size:12px;color:#15101c;transform:scaleX(0.8486);">ADU</span>
<span class="t" style="left:191.00px;top:705.74px;font-size:12px;color:#15101c;transform:scaleX(0.9718);">Moy. : Med.[3x3]= 4.67 : 5.00</span>
<div style="left:398px;top:704px;width:1px;height:21px;background:#b9bed6;box-shadow:1px 0 0 #fafbfd"></div>
<span class="t" style="left:402.50px;top:705.74px;font-size:12px;color:#15101c;transform:scaleX(1.0108);">Click gauche pour identifier ou bouger, click droit pour d'autres fonctions.</span>
<div style="left:798px;top:704px;width:1px;height:21px;background:#b9bed6;box-shadow:1px 0 0 #fafbfd"></div>
<span class="t" style="left:805.00px;top:705.74px;font-size:12px;color:#15101c;transform:scaleX(0.9567);">Format 1280x1024x1 [Réels 32bits]  Zoom = 1/2</span>
</body></html>
